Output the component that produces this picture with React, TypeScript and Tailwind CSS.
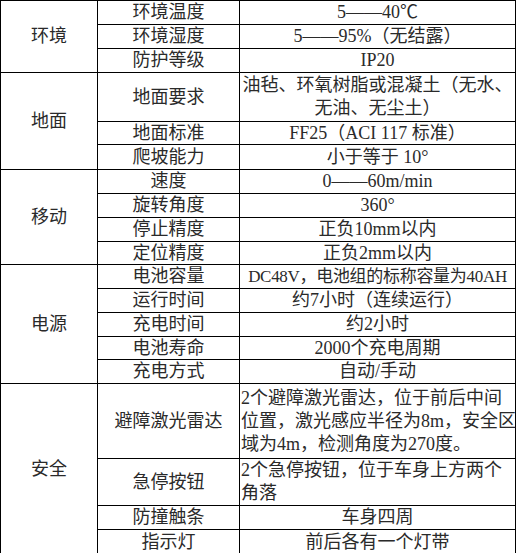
import React from 'react';

type Row = {
  group?: { name: string; span: number };
  item: string;
  value: string[];
  h: number;
  left?: boolean;
  small?: boolean;
};

const rows: Row[] = [
  { group: { name: '环境', span: 3 }, item: '环境温度', value: ['5——40℃'], h: 23 },
  { item: '环境湿度', value: ['5——95%（无结露）'], h: 23 },
  { item: '防护等级', value: ['IP20'], h: 23 },
  { group: { name: '地面', span: 3 }, item: '地面要求', value: ['油毡、环氧树脂或混凝土（无水、', '无油、无尘土）'], h: 48 },
  { item: '地面标准', value: ['FF25（ACI 117 标准）'], h: 22 },
  { item: '爬坡能力', value: ['小于等于 10°'], h: 24 },
  { group: { name: '移动', span: 4 }, item: '速度', value: ['0——60m/min'], h: 23 },
  { item: '旋转角度', value: ['360°'], h: 23 },
  { item: '停止精度', value: ['正负10mm以内'], h: 23 },
  { item: '定位精度', value: ['正负2mm以内'], h: 22 },
  { group: { name: '电源', span: 5 }, item: '电池容量', value: ['DC48V，电池组的标称容量为40AH'], h: 23, small: true },
  { item: '运行时间', value: ['约7小时（连续运行）'], h: 23 },
  { item: '充电时间', value: ['约2小时'], h: 23 },
  { item: '电池寿命', value: ['2000个充电周期'], h: 22 },
  { item: '充电方式', value: ['自动/手动'], h: 23 },
  { group: { name: '安全', span: 4 }, item: '避障激光雷达', value: ['2个避障激光雷达，位于前后中间', '位置，激光感应半径为8m，安全区', '域为4m，检测角度为270度。'], h: 74, left: true },
  { item: '急停按钮', value: ['2个急停按钮，位于车身上方两个', '角落'], h: 46, left: true },
  { item: '防撞触条', value: ['车身四周'], h: 23 },
  { item: '指示灯', value: ['前后各有一个灯带'], h: 24 },
];

const cell = 'border border-black p-0 align-middle';

export default function App() {
  return (
    <div className="bg-white w-[517px] h-[553px] font-[family-name:'Liberation_Serif','Noto_Sans_CJK_SC',serif] text-[18px] leading-[23px] text-[#2a2a2a]">
      <table className="table-fixed border-collapse w-[515px] border border-black">
        <colgroup>
          <col className="w-[97px]" />
          <col className="w-[142px]" />
          <col className="w-[276px]" />
        </colgroup>
        <tbody>
          {rows.map((r, i) => (
            <tr key={i}>
              {r.group && (
                <td rowSpan={r.group.span} className={cell}>
                  <div className="flex items-center justify-center">{r.group.name}</div>
                </td>
              )}
              <td className={cell}>
                <div style={{ height: r.h }} className="flex items-center justify-center whitespace-nowrap">
                  {r.item}
                </div>
              </td>
              <td className={cell}>
                <div
                  style={{ height: r.h }}
                  className={
                    r.left
                      ? 'flex flex-col justify-center items-start px-[1px] whitespace-nowrap'
                      : r.small
                      ? 'flex flex-col justify-center items-center whitespace-nowrap text-[17px] tracking-[-0.3px]'
                      : 'flex flex-col justify-center items-center whitespace-nowrap'
                  }
                >
                  {r.value.map((line, j) => (
                    <div key={j} className="h-[23px] leading-[23px] flex items-center">
                      {line}
                    </div>
                  ))}
                </div>
              </td>
            </tr>
          ))}
        </tbody>
      </table>
    </div>
  );
}
